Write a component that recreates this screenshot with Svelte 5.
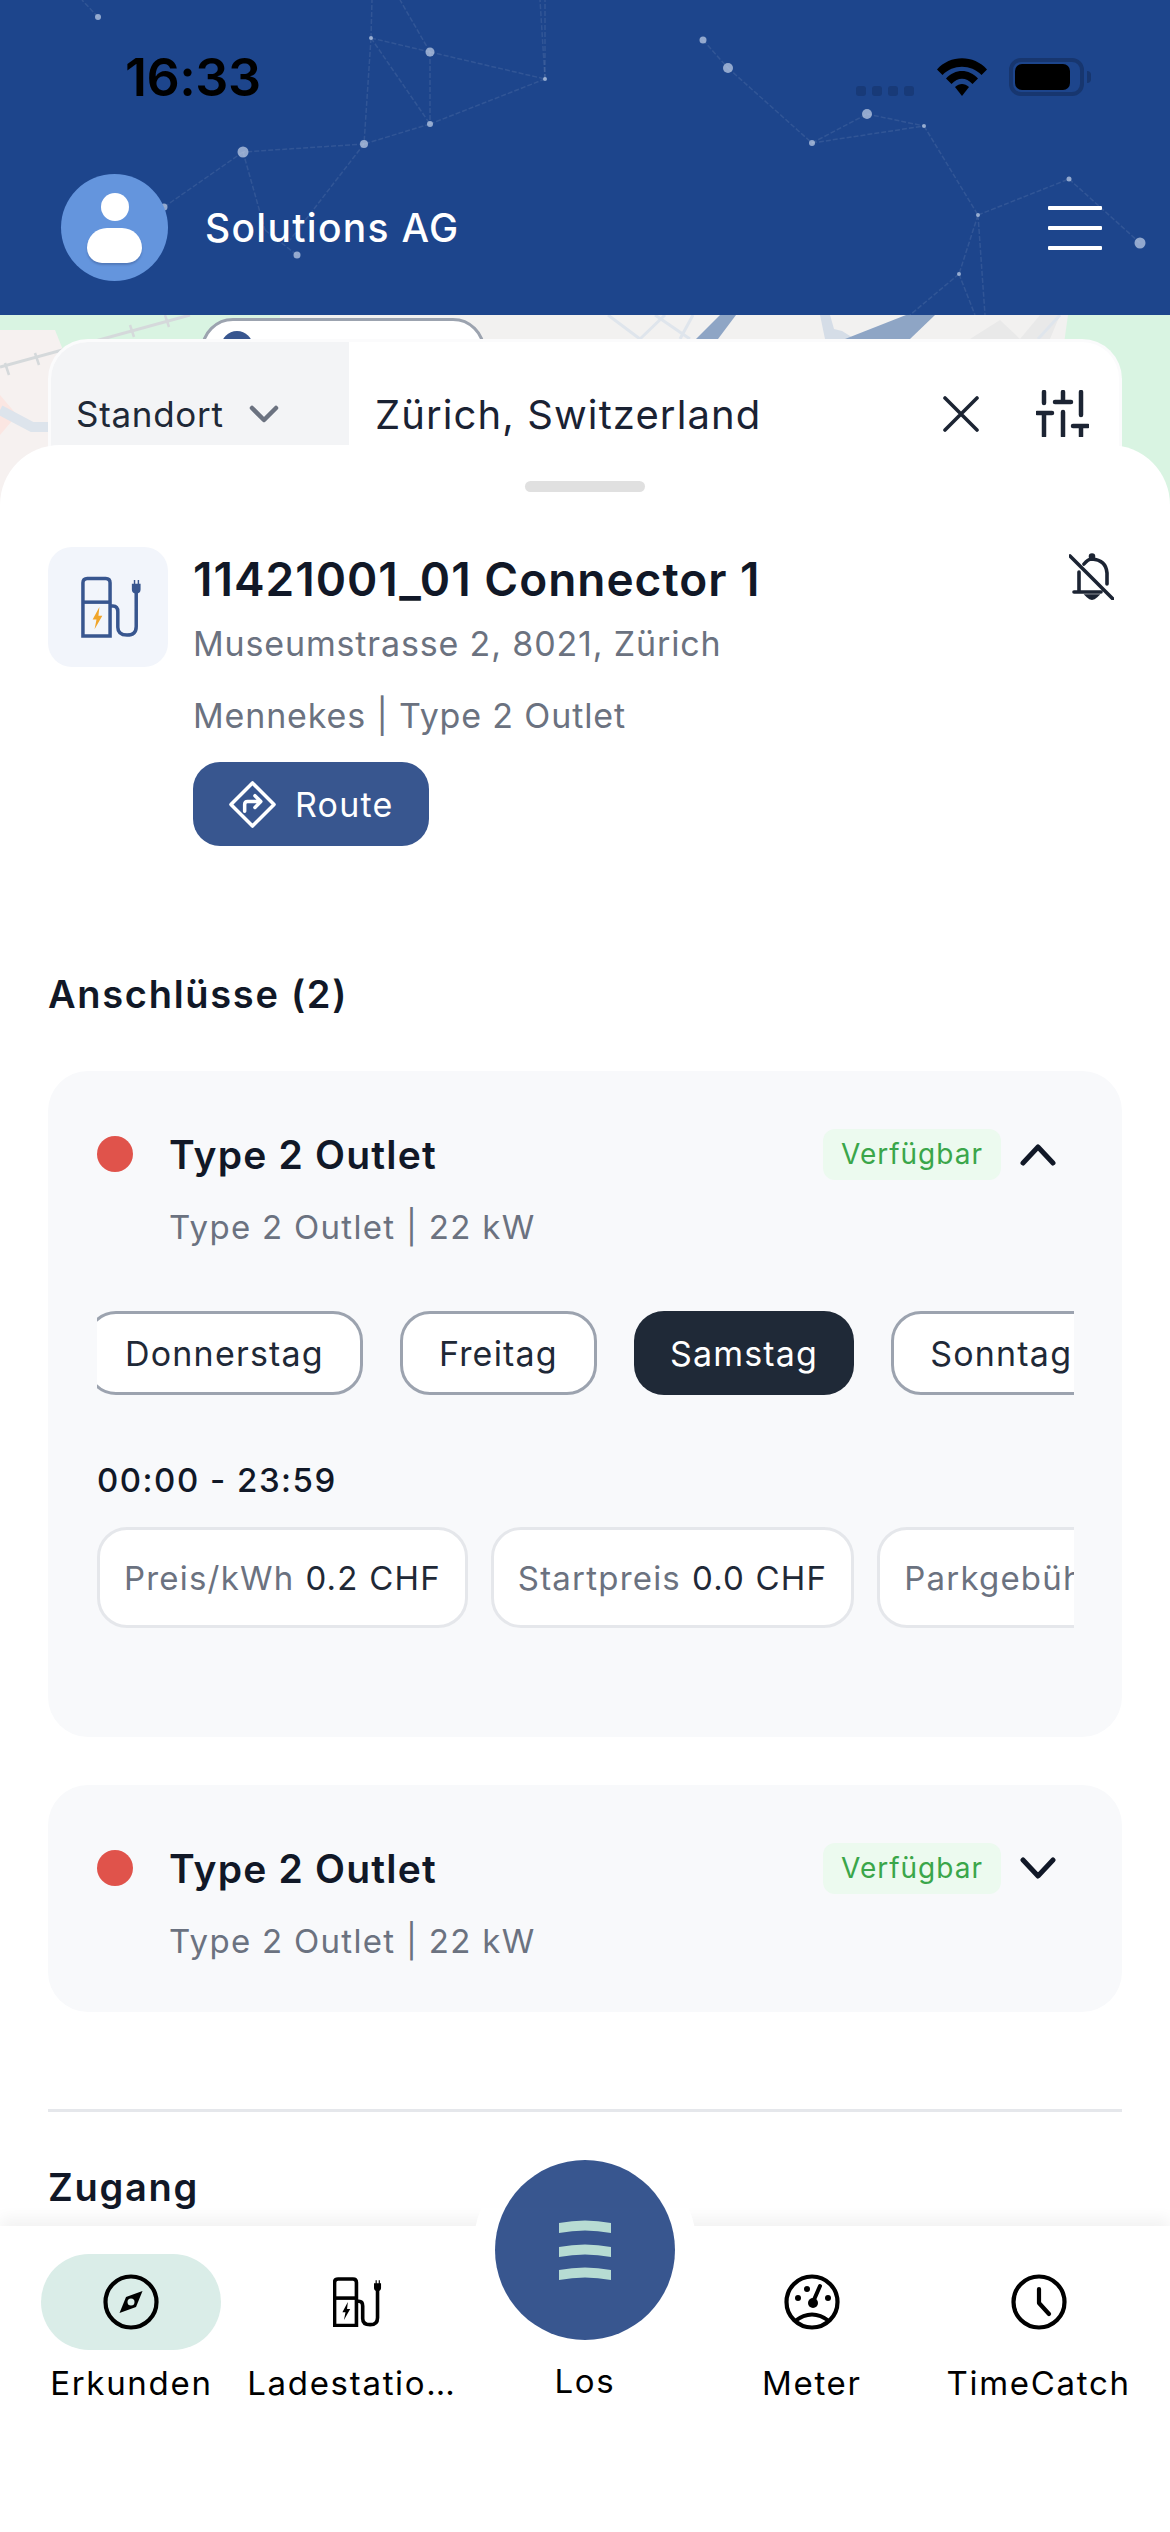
<script>
  const lines = [
    [98,17,82,0],[371,38,372,0],[430,52,400,0],[545,79,545,0],[371,38,430,52],[430,52,545,79],[371,38,430,124],[430,52,430,124],[545,79,430,124],[371,38,364,144],
    [430,124,364,144],[364,144,243,152],[243,152,164,207],[243,152,265,230],[265,230,297,255],[364,144,290,240],[703,40,728,68],[728,68,812,143],[812,143,867,114],[812,143,924,126],
    [867,114,924,126],[924,126,978,215],[978,215,1069,179],[1069,179,1140,243],[978,215,959,274],[959,274,910,315],[959,274,975,315],[978,215,985,315],[545,79,540,0]
  ];
  const dots = [[98,17,3],[371,38,2],[430,52,4.500],[545,79,2],[430,124,3],[364,144,4],[243,152,5.500],[164,207,3.500],[297,255,3.500],[703,40,3.500],[728,68,5],[812,143,3],[867,114,5],[924,126,2],[1069,179,2.500],[978,215,2],[1140,243,5.500],[959,274,2]];
  const days = [
    { name: 'Donnerstag', on: false },
    { name: 'Freitag', on: false },
    { name: 'Samstag', on: true },
    { name: 'Sonntag', on: false }
  ];
  const prices = [
    { label: 'Preis/kWh', value: '0.2 CHF' },
    { label: 'Startpreis', value: '0.0 CHF' },
    { label: 'Parkgebühr', value: '0.0 CHF' }
  ];
</script>

{#snippet charger(color, bolt, w)}
  <svg class="fill-box" viewBox="0 0 64 64" fill="none">
    <path d="M2 62V7q0-4.500 4.500-4.500h19q4.500 0 4.500 4.500v55z" stroke={color} stroke-width={w}/>
    <path d="M2 27h28" stroke={color} stroke-width={w}/>
    <path d="M30 31h3q5 0 5 6v16q0 8 9.500 8t9.500-9V17" stroke={color} stroke-width={w}/>
    <path d="M52.500 8h2V4h1.500v4h2.500V4h1.500v4h1.500v6q0 4-4.500 4t-4.500-4z" fill={color}/>
    <path d="M19 32l-7 13h4l-2 10 8-14h-4z" fill={bolt}/>
  </svg>
{/snippet}

{#snippet outlet(open)}
  <div class="outlet-head">
    <span class="dot"></span>
    <span class="outlet-title">Type 2 Outlet</span>
    <span class="status">Verfügbar</span>
    <svg class="chev" viewBox="0 0 36 24" fill="none">
      <path d={open ? 'M3 21L18 5l15 16' : 'M3 4l15 16L33 4'} stroke="#111827" stroke-width="5" stroke-linecap="round" stroke-linejoin="round"/>
    </svg>
  </div>
  <div class="outlet-sub">Type 2 Outlet | 22 kW</div>
{/snippet}

<div class="screen">
  <header class="header">
    <svg class="stars" viewBox="0 0 1170 315">
      {#each lines as l}
        <line x1={l[0]} y1={l[1]} x2={l[2]} y2={l[3]} stroke="#fff" stroke-opacity=".09" stroke-width="1.500" stroke-dasharray="5 2"/>
      {/each}
      {#each dots as d}
        <circle cx={d[0]} cy={d[1]} r={d[2]} fill="#c5d3ea" fill-opacity=".7"/>
      {/each}
    </svg>
    <div class="status-bar">
      <span class="time">16:33</span>
      <div class="sys">
        <div class="cell"><i></i><i></i><i></i><i></i></div>
        <svg class="wifi" viewBox="0 0 50 38">
          <path d="M0 11.500C13-3.500 37-3.500 50 11.500L44.500 17C34 6 16 6 5.500 17z"/>
          <path d="M9 20.500C18 10.500 32 10.500 41 20.500L35.500 26C29 19 21 19 14.500 26z"/>
          <path d="M18 29c4.500-4 9.500-4 14 0L25 38z"/>
        </svg>
        <div class="battery"><span></span></div>
        <span class="nub"></span>
      </div>
    </div>
    <div class="toolbar">
      <div class="avatar">
        <span class="head"></span>
        <span class="body"></span>
      </div>
      <span class="company">Solutions AG</span>
      <div class="menu"><i></i><i></i><i></i></div>
    </div>
  </header>

  <section class="map">
    <svg class="map-art" viewBox="0 0 1170 200" preserveAspectRatio="none">
      <rect width="1170" height="200" fill="#d9f4e2"/>
      <path d="M0 15H55L65 40 48 200H0z" fill="#f6f1f0"/>
      <path d="M0 80L17 100 0 120z" fill="#fbe6e2"/>
      <path d="M0 52L190 0" stroke="#d5d9db" stroke-width="3"/>
      <path d="M5 48l4 12M35 38l4 12M130 10l4 12M165 0l4 12" stroke="#d5d9db" stroke-width="2.500"/>
      <path d="M0 95L32 112H52" stroke="#dde4ec" stroke-width="10" fill="none"/>
      <path d="M280 0H1068L1040 200H280z" fill="#f2f1f0"/>
      <path d="M1000 5L1020 24 1040 0 1060 0 1050 24H970z" fill="#e9e9e9"/>
      <path d="M608 0L640 24M665 0L640 24M655 0L690 24M693 0L680 24M1060 0L1038 24" stroke="#dfe5ec" stroke-width="3" fill="none"/>
      <path d="M720 0L696 24H718L736 0z" fill="#8ea5c5"/>
      <path d="M820 0L825 24H855L842 16 834 14 830 0z" fill="#d5dde7"/>
      <path d="M935 0H906L845 24H910z" fill="#8ea5c5"/>
    </svg>
    <div class="pin">
      <span class="pin-dot"></span>
    </div>
    <div class="search">
      <div class="kind">
        <span>Standort</span>
        <svg class="kind-chev" viewBox="0 0 30 20" fill="none"><path d="M3 4l12 12L27 4" stroke="#6b7280" stroke-width="4.500" stroke-linejoin="round" stroke-linecap="round"/></svg>
      </div>
      <span class="query">Zürich, Switzerland</span>
      <svg class="close" viewBox="0 0 36 36" fill="none"><path d="M2 2l32 32M34 2L2 34" stroke="#1c2433" stroke-width="3.600" stroke-linecap="round"/></svg>
      <svg class="sliders" viewBox="0 0 53 47" fill="none" stroke="#1c2433" stroke-width="4.500" stroke-linecap="round">
        <path d="M8 2v11M1 23h15M8 23v23M27 2v10M19 12h16M27 22v24M45 2v23M37 36h15M45 36v10"/>
      </svg>
    </div>
  </section>

  <main class="sheet">
    <div class="grip"></div>
    <div class="detail">
      <div class="thumb"><div class="thumb-icon">{@render charger('#38568f', '#f0a52b', 3.600)}</div></div>
      <div class="info">
        <h1>11421001_01 Connector 1</h1>
        <p class="addr">Museumstrasse 2, 8021, Zürich</p>
        <p class="type">Mennekes | Type 2 Outlet</p>
        <button class="route">
          <svg viewBox="0 0 48 48" fill="none" stroke="#fff" stroke-width="3.600" stroke-linejoin="round" stroke-linecap="round">
            <path d="M24 2L46 24 24 46 2 24z"/>
            <path d="M16 31v-7q0-3 3-3h13M26.500 15l6 6-6 6"/>
          </svg>
          <span>Route</span>
        </button>
      </div>
      <svg class="bell" viewBox="0 0 45 47" fill="none" stroke="#1c2433" stroke-width="3.600" stroke-linecap="round">
        <path d="M1 3l43 43M5 39h27M10 39V19M15 11q4-5 8-5 14 1 15 14v11"/>
        <path d="M19 43q4 4 8 0z" fill="#1c2433"/>
        <circle cx="23" cy="3.500" r="1.500" fill="#1c2433"/>
      </svg>
    </div>

    <h2 class="section-title">Anschlüsse (2)</h2>

    <article class="card open">
      {@render outlet(true)}
      <div class="days">
        {#each days as d}
          <span class="day" class:on={d.on}>{d.name}</span>
        {/each}
      </div>
      <div class="hours">00:00 - 23:59</div>
      <div class="prices">
        {#each prices as p}
          <span class="price"><em>{p.label}</em><b>{p.value}</b></span>
        {/each}
      </div>
    </article>

    <article class="card closed">
      {@render outlet(false)}
    </article>

    <hr class="divider" />
    <h2 class="access">Zugang</h2>
  </main>

  <nav class="tabs">
    <span class="bump"></span>
    <div class="tab">
      <div class="tab-icon active">
        <svg viewBox="0 0 56 56" fill="none">
          <circle cx="28" cy="28" r="25.500" stroke="#000" stroke-width="4.200"/>
          <path d="M39.500 17L33 33 16.500 39 23 23z" fill="#000"/>
          <circle cx="28" cy="28" r="3.500" fill="#daede8"/>
        </svg>
      </div>
      <span class="tab-label">Erkunden</span>
    </div>
    <div class="tab">
      <div class="tab-icon"><div class="nav-charger">{@render charger('#000', '#000', 4.600)}</div></div>
      <span class="tab-label clip">Ladestationen</span>
    </div>
    <div class="tab go">
      <div class="go-btn">
        <svg viewBox="0 0 52 60">
          <path d="M0 3q26-5 52 0v10q-26-5-52 0zM0 27q26-5 52 0v10q-26-5-52 0zM0 50q26-5 52 0v10q-26-5-52 0z" fill="#b7dcd3"/>
        </svg>
      </div>
      <span class="tab-label">Los</span>
    </div>
    <div class="tab">
      <div class="tab-icon">
        <svg viewBox="0 0 56 56" fill="none" stroke="#000">
          <circle cx="28" cy="28" r="25.500" stroke-width="4.200"/>
          <path d="M11 47q17-13 34 0" stroke-width="4"/>
          <path d="M29 28L36 12" stroke-width="4" stroke-linecap="round"/>
          <circle cx="29" cy="29" r="5" fill="#000" stroke="none"/>
          <circle cx="14" cy="24" r="3" fill="#000" stroke="none"/>
          <circle cx="23" cy="15" r="3" fill="#000" stroke="none"/>
          <circle cx="44" cy="24" r="3" fill="#000" stroke="none"/>
        </svg>
      </div>
      <span class="tab-label">Meter</span>
    </div>
    <div class="tab">
      <div class="tab-icon">
        <svg viewBox="0 0 56 56" fill="none" stroke="#000">
          <circle cx="28" cy="28" r="25.500" stroke-width="4.200"/>
          <path d="M28 15v14l10 11" stroke-width="4.200" stroke-linecap="round" stroke-linejoin="round"/>
        </svg>
      </div>
      <span class="tab-label">TimeCatch</span>
    </div>
  </nav>
</div>

<style>
  :global(body) { margin: 0; background: #fff; }
  * { box-sizing: border-box; }
  .screen {
    position: relative;
    width: 1170px;
    height: 2532px;
    overflow: hidden;
    background: #fff;
    font-family: Inter, "Noto Sans", sans-serif;
    color: #111827;
  }

  .header {
    position: relative;
    height: 315px;
    background: #1d458c;
    overflow: hidden;
  }
  .stars { position: absolute; inset: 0; width: 1170px; height: 315px; }
  .status-bar {
    position: relative;
    display: flex;
    justify-content: space-between;
    align-items: center;
    height: 154px;
    padding: 0 79px 0 125px;
  }
  .time { font-size: 52px; font-weight: 600; color: #000; letter-spacing: -0.5px; }
  .sys { display: flex; align-items: center; }
  .cell { display: flex; gap: 6px; margin: 28px 23px 0 0; }
  .cell i { width: 10px; height: 10px; border-radius: 3px; background: #183a78; }
  .wifi { width: 50px; height: 38px; margin-right: 22px; fill: #000; }
  .battery {
    width: 75px;
    height: 38px;
    border: 4px solid #17366f;
    border-radius: 12px;
    padding: 2px;
  }
  .battery span { display: block; width: 55px; height: 100%; background: #000; border-radius: 7px; }
  .nub { width: 4px; height: 12px; margin-left: 3px; background: #17366f; border-radius: 0 4px 4px 0; }

  .toolbar {
    position: relative;
    display: flex;
    align-items: center;
    margin-top: 20px;
    padding: 0 68px 0 61px;
  }
  .avatar {
    position: relative;
    width: 107px;
    height: 107px;
    border-radius: 50%;
    background: #6495dd;
    display: flex;
    flex-direction: column;
    align-items: center;
    padding-top: 19px;
    gap: 7px;
  }
  .head { width: 28px; height: 28px; border-radius: 50%; background: #fff; }
  .body { width: 55px; height: 35px; border-radius: 24px 24px 18px 18px; background: #fff; box-shadow: 0 2px 2px rgba(40, 60, 110, .3); }
  .company { margin-left: 37px; flex: 1; color: #fff; font-size: 39px; font-weight: 500; letter-spacing: 1.3px; }
  .menu { display: flex; flex-direction: column; gap: 16px; width: 54px; }
  .menu i { height: 4px; background: #fff; border-radius: 1px; }

  .map { position: relative; height: 200px; overflow: hidden; }
  .map-art { position: absolute; inset: 0; width: 1170px; height: 200px; }
  .pin {
    position: absolute;
    left: 201px;
    top: 3px;
    width: 284px;
    height: 80px;
    background: #fff;
    border: 3px solid #9ca3af;
    border-radius: 32px;
  }
  .pin-dot { position: absolute; left: 17px; top: 10px; width: 32px; height: 32px; border-radius: 50%; background: #38568f; }
  .search {
    position: relative;
    display: flex;
    height: 176px;
    margin: 24px 48px 0;
    background: #fff;
    border: 3px solid #fbfbfc;
    border-bottom: 0;
    border-radius: 40px 40px 0 0;
    overflow: hidden;
  }
  .kind {
    display: flex;
    align-items: flex-start;
    width: 298px;
    background: #f3f4f6;
    padding: 47px 0 0 25px;
    font-size: 35px;
    line-height: 50px;
    letter-spacing: .7px;
    color: #1f2937;
  }
  .kind-chev { width: 30px; height: 20px; margin: 15px 0 0 25px; flex: none; }
  .query {
    margin: 48px 0 0 26px;
    flex: 1;
    font-size: 40px;
    line-height: 50px;
    letter-spacing: 1.100px;
    color: #1a2233;
  }
  .close { width: 36px; height: 36px; margin: 54px 57px 0 0; flex: none; }
  .sliders { width: 53px; height: 47px; margin: 48px 30px 0 0; flex: none; }

  .sheet {
    position: relative;
    margin-top: -70px;
    height: 2087px;
    padding: 36px 48px 0;
    background: #fff;
    border-radius: 60px 60px 0 0;
  }
  .grip { width: 120px; height: 11px; margin: 0 auto; border-radius: 6px; background: #e0e0e0; }
  .detail { display: flex; margin-top: 57px; gap: 25px; }
  .thumb {
    flex: none;
    width: 120px;
    height: 120px;
    margin-top: -2px;
    border-radius: 24px;
    background: #f2f5fb;
    padding: 29px 0 0 33px;
  }
  .thumb-icon { width: 62px; height: 62px; }
  .fill-box { display: block; width: 100%; height: 100%; }
  .info { flex: 1; }
  h1 { margin: 0; font-size: 46px; line-height: 60px; font-weight: 600; letter-spacing: 1px; color: #111827; }
  .addr, .type { margin: 0; font-size: 34px; line-height: 50px; letter-spacing: .85px; color: #6b7280; }
  .addr { margin-top: 10px; }
  .type { margin-top: 22px; }
  .route {
    display: flex;
    align-items: center;
    gap: 19px;
    width: 236px;
    height: 84px;
    margin-top: 21px;
    padding: 0 0 0 36px;
    border: 0;
    border-radius: 27px;
    background: #38568f;
    color: #fff;
    font: 400 34px Inter, sans-serif;
    letter-spacing: 1.2px;
  }
  .route svg { width: 47px; height: 47px; flex: none; }
  .bell { width: 45px; height: 47px; margin: 4px 8px 0 0; flex: none; }

  .section-title { margin: 123px 0 0; font-size: 38px; line-height: 50px; font-weight: 600; letter-spacing: 1.7px; color: #111827; }
  .card { margin-top: 48px; border-radius: 40px; background: #f8f9fb; padding: 53px 48px 46px 49px; }
  .card.open { margin-top: 52px; padding-bottom: 109px; }
  .outlet-head { display: flex; align-items: center; height: 60px; }
  .dot { width: 36px; height: 36px; border-radius: 50%; background: #e0534b; flex: none; }
  .outlet-title { flex: 1; margin-left: 36px; font-size: 39px; font-weight: 600; letter-spacing: 1.2px; color: #111827; }
  .status {
    display: flex;
    align-items: center;
    justify-content: center;
    width: 178px;
    height: 51px;
    border-radius: 12px;
    background: #ecfaef;
    color: #3aa64a;
    font-size: 28px;
    letter-spacing: 1px;
  }
  .chev { width: 36px; height: 24px; margin: 0 18px 0 19px; flex: none; }
  .outlet-sub { margin: 18px 0 0 72px; font-size: 33px; line-height: 50px; letter-spacing: 1.3px; color: #6b7280; }

  .days { display: flex; gap: 37px; margin-top: 59px; overflow: hidden; }
  .day {
    flex: none;
    display: flex;
    align-items: center;
    height: 84px;
    padding: 0 36px;
    border: 3px solid #9ca3af;
    border-radius: 30px;
    background: #fff;
    font-size: 34px;
    letter-spacing: 1.200px;
    color: #1f2937;
  }
  .day:first-child { margin-left: -11px; }
  .day.on { background: #1f2937; border: 0; color: #fff; }
  .hours { margin-top: 60px; font-size: 33px; line-height: 50px; font-weight: 500; letter-spacing: 1.5px; color: #111827; }
  .prices { display: flex; gap: 23px; margin-top: 22px; overflow: hidden; }
  .price {
    flex: none;
    display: flex;
    align-items: center;
    gap: 11px;
    height: 101px;
    padding: 0 24px;
    border: 3px solid #e5e7eb;
    border-radius: 30px;
    background: #fff;
    font-size: 33px;
    letter-spacing: 1.2px;
  }
  .price em { font-style: normal; color: #6b7280; }
  .price b { font-weight: 400; color: #1f2937; }

  .divider { margin: 97px 0 0; border: 0; border-top: 3px solid #e5e7eb; }
  .access { margin: 50px 0 0; font-size: 38px; line-height: 50px; font-weight: 600; letter-spacing: 1.7px; color: #111827; }

  .tabs {
    position: absolute;
    left: 0;
    right: 0;
    bottom: 0;
    height: 306px;
    padding: 0 18px;
    display: grid;
    grid-template-columns: repeat(5, 1fr);
    background: #fff;
    box-shadow: 0 -8px 14px rgba(0, 0, 0, .05);
  }
  .bump { position: absolute; left: 473px; top: -88px; width: 224px; height: 224px; border-radius: 50%; background: #fff; }
  .tab { position: relative; display: flex; flex-direction: column; align-items: center; }
  .tab-icon {
    display: flex;
    align-items: center;
    justify-content: center;
    width: 180px;
    height: 96px;
    margin-top: 28px;
    border-radius: 48px;
  }
  .tab-icon.active { background: #daede8; }
  .tab-icon svg { width: 56px; height: 56px; }
  .nav-charger { width: 50px; height: 50px; }
  .tab-icon .nav-charger :global(svg) { width: 50px; height: 50px; }
  .tab-label {
    margin-top: 8px;
    font-size: 33px;
    line-height: 50px;
    letter-spacing: 1.7px;
    color: #000;
    white-space: nowrap;
  }
  .tab-label.clip { width: 222px; overflow: hidden; text-overflow: ellipsis; }
  .go-btn {
    display: flex;
    align-items: center;
    justify-content: center;
    width: 180px;
    height: 180px;
    margin-top: -66px;
    border-radius: 50%;
    background: #38568f;
  }
  .go-btn svg { width: 52px; height: 60px; }
  .go .tab-label { margin-top: 16px; }
</style>
